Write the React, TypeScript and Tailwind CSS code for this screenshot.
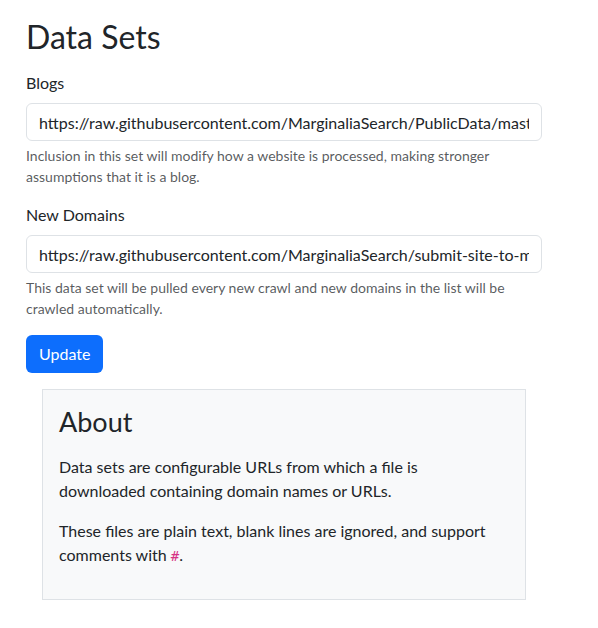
import React from "react"

const sets = [
  {
    name: "Blogs",
    url: "https://raw.githubusercontent.com/MarginaliaSearch/PublicData/master/sets/blogs.txt",
    help: "Inclusion in this set will modify how a website is processed, making stronger assumptions that it is a blog.",
  },
  {
    name: "New Domains",
    url: "https://raw.githubusercontent.com/MarginaliaSearch/submit-site-to-marginalia-search/master/urls.txt",
    help: "This data set will be pulled every new crawl and new domains in the list will be crawled automatically.",
  },
]

export default function App() {
  return (
    <div
      className="min-h-screen bg-white px-[26px] pt-[18px] text-[16px] leading-[1.5] text-[#212529]"
      style={{ fontFamily: "Lato, 'Noto Sans', sans-serif" }}
    >
      <div className="w-[516px]">
        <h1 className="mb-[15px] text-[32px] font-normal leading-[1.2]">Data Sets</h1>

        <form>
          {sets.map((s) => (
            <div key={s.name} className="mb-4">
              <label className="mb-2 block">{s.name}</label>
              <input
                type="text"
                readOnly
                defaultValue={s.url}
                className="block h-[38px] w-full rounded-[6px] border border-[#dee2e6] bg-white px-3 text-[16px] text-[#212529] outline-none"
              />
              <div className="mt-1 text-[14px] leading-[1.5] text-[rgba(33,37,41,0.75)]">{s.help}</div>
            </div>
          ))}
          <button
            type="button"
            className="h-[38px] rounded-[6px] bg-[#0d6efd] px-[13px] text-[16px] text-white"
          >
            Update
          </button>
        </form>

        <div className="mt-4 ml-4 w-[484px] border border-[#dee2e6] bg-[#f8f9fa] px-4 pt-4 pb-4">
          <h2 className="mb-4 text-[27px] font-normal leading-[1.2]">About</h2>
          <p className="mb-4 max-w-[440px]">
            Data sets are configurable URLs from which a file is downloaded containing domain names or URLs.
          </p>
          <p className="mb-4 max-w-[440px]">
            These files are plain text, blank lines are ignored, and support comments with{" "}
            <code
              className="text-[14px] leading-none text-[#d63384]"
              style={{ fontFamily: "'DejaVu Sans Mono', monospace" }}
            >
              #
            </code>
            .
          </p>
        </div>
      </div>
    </div>
  )
}
